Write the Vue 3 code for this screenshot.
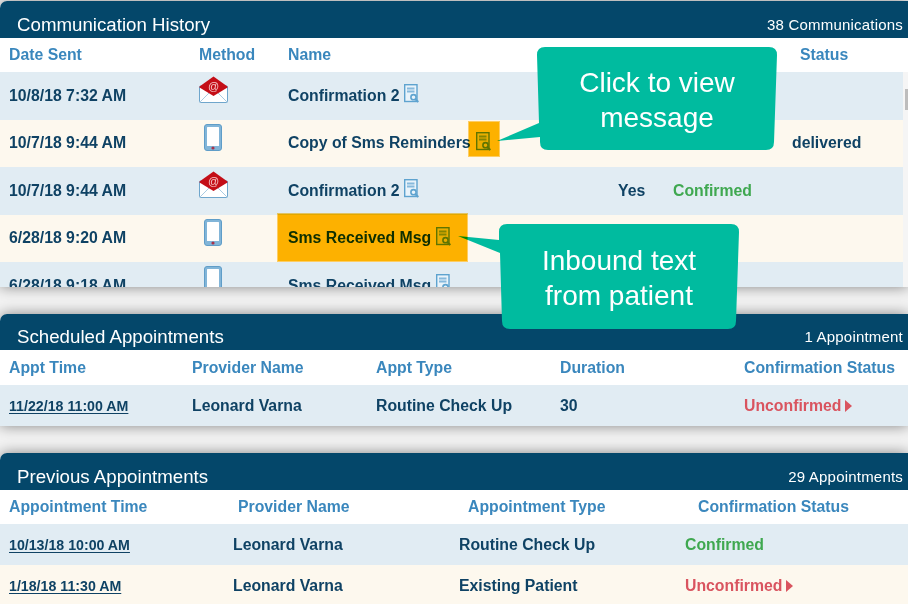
<template>
  <div class="page">
    <!-- Communication History -->
    <section class="panel">
      <header class="panel-head">
        <h2>Communication History</h2>
        <span class="count">38 Communications</span>
      </header>
      <div class="cols comm-cols thead first">
        <span>Date Sent</span>
        <span>Method</span>
        <span>Name</span>
        <span></span>
        <span></span>
        <span class="status-head">Status</span>
      </div>
      <div class="comm-body">
        <div class="comm-rows">
          <div v-for="(c, i) in comms" :key="i" class="cols comm-cols row comm-row">
            <span>{{ c.date }}</span>
            <span class="method">
              <svg v-if="c.method === 'mail'" class="mail" width="29" height="27" viewBox="0 0 29 27">
                <rect x="0.5" y="10" width="28" height="16.500" rx="1" fill="#fff" stroke="#6fa6cc" />
                <path d="M1 26L11.500 15.500M28 26L17.500 15.500" stroke="#a9cbe2" fill="none" />
                <path d="M14.500 0.500L28.500 10.500V11.500L14.500 20L0.500 11.500V10.500Z" fill="#c40e17" />
                <text x="14.500" y="14" text-anchor="middle" class="at">@</text>
              </svg>
              <svg v-else class="phone" width="18" height="27" viewBox="0 0 18 27">
                <rect x="0.500" y="0.500" width="17" height="26" rx="2.500" fill="#82b5d8" stroke="#5f9dc8" />
                <rect x="3" y="3" width="12" height="19" rx="0.500" fill="#fff" />
                <circle cx="9" cy="24" r="1.600" fill="#a8324a" />
              </svg>
            </span>
            <span class="name">
              <span>{{ c.name }}</span>
              <svg class="doc" width="15" height="19" viewBox="0 0 15 19">
                <rect x="0.700" y="0.700" width="12.300" height="16.800" fill="#e9f3fa" stroke="#5ea3cf" stroke-width="1.400" />
                <path d="M3 4.500h7.500M3 7.500h7.500" stroke="#86b9dc" stroke-width="1.800" />
                <circle cx="9.500" cy="13.200" r="2.600" fill="#e9f3fa" stroke="#5ea3cf" stroke-width="1.600" />
                <path d="M11.300 15.200L14.400 18" stroke="#5ea3cf" stroke-width="2" />
              </svg>
            </span>
            <span>{{ c.reply }}</span>
            <span class="ok">{{ c.confirm }}</span>
            <span>{{ c.status }}</span>
          </div>
        </div>
        <div class="scrollbar"><div class="thumb"></div></div>
      </div>
    </section>

    <!-- Scheduled Appointments -->
    <section class="panel">
      <header class="panel-head short">
        <h2>Scheduled Appointments</h2>
        <span class="count">1 Appointment</span>
      </header>
      <div class="cols sched-cols thead">
        <span>Appt Time</span>
        <span>Provider Name</span>
        <span>Appt Type</span>
        <span>Duration</span>
        <span>Confirmation Status</span>
      </div>
      <div class="cols sched-cols row appt-row">
        <a class="time">11/22/18 11:00 AM</a>
        <span>Leonard Varna</span>
        <span>Routine Check Up</span>
        <span>30</span>
        <span class="bad">Unconfirmed<i class="arrow"></i></span>
      </div>
    </section>

    <!-- Previous Appointments -->
    <section class="panel last">
      <header class="panel-head">
        <h2>Previous Appointments</h2>
        <span class="count">29 Appointments</span>
      </header>
      <div class="cols prev-head thead">
        <span>Appointment Time</span>
        <span>Provider Name</span>
        <span>Appointment Type</span>
        <span>Confirmation Status</span>
      </div>
      <div v-for="(a, i) in previous" :key="i" class="cols prev-cols row appt-row">
        <a class="time">{{ a.time }}</a>
        <span>Leonard Varna</span>
        <span>{{ a.type }}</span>
        <span v-if="a.ok" class="ok">Confirmed</span>
        <span v-else class="bad">Unconfirmed<i class="arrow"></i></span>
      </div>
    </section>

    <!-- Annotations -->
    <svg class="callout-shape" width="908" height="604" viewBox="0 0 908 604">
      <path d="M545 47H769Q777 47 777 55L774 142Q774 150 766 150H548Q540 150 540 142L540 137L497 141L539 123L537 55Q537 47 545 47Z" fill="#00bb9f" />
      <path d="M507 224H731Q739 224 739 232L736 321Q736 329 728 329H510Q502 329 502 321L500 253L458 236L499 240L499 232Q499 224 507 224Z" fill="#00bb9f" />
    </svg>
    <div class="hl hl-icon"></div>
    <div class="hl hl-name"></div>
    <div class="note note-view">Click to view<br />message</div>
    <div class="note note-inbound">Inbound text<br />from patient</div>
  </div>
</template>

<script setup>
const comms = [
  { date: '10/8/18 7:32 AM', method: 'mail', name: 'Confirmation 2', reply: '', confirm: '', status: '' },
  { date: '10/7/18 9:44 AM', method: 'sms', name: 'Copy of Sms Reminders', reply: '', confirm: '', status: 'delivered' },
  { date: '10/7/18 9:44 AM', method: 'mail', name: 'Confirmation 2', reply: 'Yes', confirm: 'Confirmed', status: '' },
  { date: '6/28/18 9:20 AM', method: 'sms', name: 'Sms Received Msg', reply: '', confirm: '', status: '' },
  { date: '6/28/18 9:18 AM', method: 'sms', name: 'Sms Received Msg', reply: '', confirm: '', status: '' },
]

const previous = [
  { time: '10/13/18 10:00 AM', type: 'Routine Check Up', ok: true },
  { time: '1/18/18 11:30 AM', type: 'Existing Patient', ok: false },
]
</script>

<style>
body {
  background: #f2f2f2;
}
</style>

<style scoped>
.page {
  position: relative;
  width: 908px;
  height: 604px;
  overflow: hidden;
  padding-top: 1px;
  box-sizing: border-box;
  background: #f2f2f2;
  font-family: 'Liberation Sans', Arial, sans-serif;
  font-size: 15.8px;
  font-weight: 700;
  color: #0f4264;
}

/* Panel */
.panel {
  margin-bottom: 27px;
  background: #fff;
  box-shadow: 0 0 14px rgba(0, 0, 0, 0.45);
  border-radius: 7px 0 0 0;
}
.panel.last {
  margin-bottom: 0;
}
.panel-head {
  height: 37px;
  padding: 0 5px 0 17px;
  display: flex;
  align-items: flex-end;
  justify-content: space-between;
  background: #04476a;
  border-radius: 7px 0 0 0;
  color: #fff;
  font-weight: 400;
}
.panel-head.short {
  height: 36px;
}
.panel-head h2 {
  margin: 0 0 1px;
  font-size: 18.7px;
  line-height: 24px;
  font-weight: 400;
}
.count {
  margin-bottom: 4px;
  font-size: 15px;
  line-height: 18px;
  letter-spacing: 0.2px;
}

/* Columns */
.cols {
  display: grid;
  align-items: center;
  padding-left: 9px;
}
.comm-cols {
  grid-template-columns: 190px 89px 330px 55px 119px 1fr;
}
.sched-cols {
  grid-template-columns: 183px 184px 184px 184px 1fr;
}
.prev-head {
  grid-template-columns: 229px 230px 230px 1fr;
}
.prev-cols {
  grid-template-columns: 224px 226px 226px 1fr;
}
.thead {
  height: 35px;
  color: #3a87bd;
}
.thead.first,
.prev-head.thead {
  height: 34px;
}
.status-head {
  padding-left: 8px;
}

/* Rows */
.row {
  background: #e1ecf3;
}
.row:nth-child(even) {
  background: #fdf8ee;
}
.comm-body {
  display: flex;
  height: 215px;
  overflow: hidden;
}
.comm-rows {
  width: 903px;
}
.comm-row {
  height: 47.5px;
}
.appt-row {
  height: 41px;
}
.panel .appt-row:nth-child(3) {
  background: #e1ecf3;
}
.panel .appt-row:nth-child(4) {
  background: #fdf8ee;
}
.method {
  display: flex;
  height: 47px;
  align-items: flex-start;
}
.mail {
  margin-top: 4px;
}
.phone {
  margin-top: 4px;
  margin-left: 5px;
}
.at {
  font-size: 11px;
  font-weight: 400;
  fill: #f7c9c9;
}
.name {
  display: flex;
  align-items: center;
  gap: 5px;
  white-space: nowrap;
}
.doc {
  margin-top: -4px;
  flex: none;
}
.time {
  font-size: 14.2px;
  text-decoration: underline;
  text-underline-offset: 2px;
}
.ok {
  color: #3fa850;
}
.bad {
  color: #d9545f;
}
.arrow {
  display: inline-block;
  margin-left: 4px;
  border-left: 7px solid #d9545f;
  border-top: 6px solid transparent;
  border-bottom: 6px solid transparent;
  vertical-align: -1px;
}

/* Scrollbar */
.scrollbar {
  flex: 1;
  padding: 17px 0 0 2px;
  background: #f5f5f5;
}
.thumb {
  height: 21px;
  background: #bdbdbd;
}

/* Annotations */
.callout-shape {
  position: absolute;
  left: 0;
  top: 0;
}
.hl {
  position: absolute;
  box-sizing: border-box;
  background: #ffb600;
  border: 1px solid #ffd36a;
  mix-blend-mode: multiply;
}
.hl-icon {
  left: 468px;
  top: 121px;
  width: 32px;
  height: 36px;
}
.hl-name {
  left: 277px;
  top: 213px;
  width: 191px;
  height: 49px;
}
.note {
  position: absolute;
  width: 240px;
  color: #fff;
  font-size: 28px;
  font-weight: 400;
  line-height: 35px;
  text-align: center;
}
.note-view {
  left: 537px;
  top: 65px;
}
.note-inbound {
  left: 499px;
  top: 243px;
}
</style>
